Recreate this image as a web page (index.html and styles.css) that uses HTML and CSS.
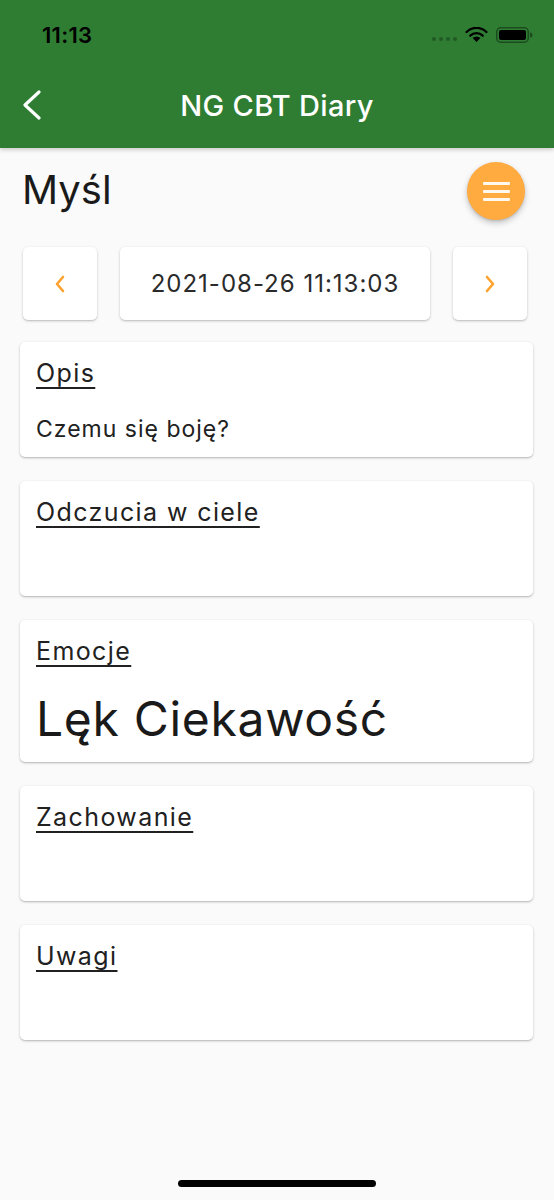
FILE: index.html
```html
<!DOCTYPE html>
<html lang="pl">
<head>
<meta charset="utf-8">
<title>NG CBT Diary</title>
<link rel="stylesheet" href="styles.css">
</head>
<body>
<div class="screen">
  <header class="appbar">
    <div class="status">
      <span class="time">11:13</span>
      <div class="status-icons">
        <span class="signal"><i></i><i></i><i></i><i></i></span>
        <svg class="wifi" width="23" height="15" viewBox="0 0 23 15">
          <path d="M11.5 15 L7.6 11 A5.6 5.6 0 0 1 15.4 11 Z" fill="#000"/>
          <path d="M5.3 8.7 A8.8 8.8 0 0 1 17.7 8.7" stroke="#000" stroke-width="2.4" fill="none" stroke-linecap="round"/>
          <path d="M1.6 5 A14 14 0 0 1 21.4 5" stroke="#000" stroke-width="2.4" fill="none" stroke-linecap="round"/>
        </svg>
        <svg class="battery" width="37" height="16" viewBox="0 0 37 16">
          <rect x="0.75" y="0.75" width="31.5" height="14.5" rx="4" fill="none" stroke="rgba(0,0,0,0.4)" stroke-width="1.5"/>
          <rect x="3" y="3" width="27" height="10" rx="2" fill="#000"/>
          <path d="M34 5.5 A2.5 2.5 0 0 1 34 10.5 Z" fill="rgba(0,0,0,0.4)"/>
        </svg>
      </div>
    </div>
    <div class="toolbar">
      <svg class="back" width="20" height="32" viewBox="0 0 20 32">
        <polyline points="17,2 3,15 17,28" fill="none" stroke="#fff" stroke-width="3.2" stroke-linecap="round" stroke-linejoin="round"/>
      </svg>
      <h1 class="title">NG CBT Diary</h1>
      <span></span>
    </div>
  </header>

  <main class="content">
    <div class="head">
      <h2 class="page-title">Myśl</h2>
      <button class="fab" type="button" aria-label="menu">
        <span></span><span></span><span></span>
      </button>
    </div>

    <div class="date-row">
      <button class="nav-btn" type="button" aria-label="poprzedni">
        <svg width="12" height="18" viewBox="0 0 12 18"><polyline points="9,2 3,9 9,16" fill="none" stroke="#ffa22e" stroke-width="2.6" stroke-linecap="round" stroke-linejoin="round"/></svg>
      </button>
      <div class="date-box">2021-08-26 11:13:03</div>
      <button class="nav-btn" type="button" aria-label="następny">
        <svg width="12" height="18" viewBox="0 0 12 18"><polyline points="3,2 9,9 3,16" fill="none" stroke="#ffa22e" stroke-width="2.6" stroke-linecap="round" stroke-linejoin="round"/></svg>
      </button>
    </div>

    <section class="card">
      <h3 class="card-title">Opis</h3>
      <p class="card-body">Czemu się boję?</p>
    </section>
    <section class="card">
      <h3 class="card-title">Odczucia w ciele</h3>
      <p class="card-body">&nbsp;</p>
    </section>
    <section class="card">
      <h3 class="card-title">Emocje</h3>
      <p class="card-body big">Lęk Ciekawość</p>
    </section>
    <section class="card">
      <h3 class="card-title">Zachowanie</h3>
      <p class="card-body">&nbsp;</p>
    </section>
    <section class="card">
      <h3 class="card-title">Uwagi</h3>
      <p class="card-body">&nbsp;</p>
    </section>
  </main>

  <div class="home-indicator"></div>
</div>
</body>
</html>
```

FILE: styles.css
```css
* { box-sizing: border-box; }

html, body {
  margin: 0;
  padding: 0;
  background: #fafafa;
}

body {
  font-family: Inter, "Noto Sans", "DejaVu Sans", sans-serif;
  color: #212121;
}

.screen {
  width: 554px;
  height: 1200px;
  display: flex;
  flex-direction: column;
  overflow: hidden;
}

.appbar {
  background: #2e7d32;
  box-shadow: 0 2px 4px rgba(0, 0, 0, 0.18);
  position: relative;
  z-index: 1;
}

.status {
  height: 66px;
  padding: 4px 21px 0 42px;
  display: flex;
  align-items: center;
  justify-content: space-between;
}

.time {
  font-size: 22px;
  font-weight: 600;
  color: #000;
  letter-spacing: 0.3px;
}

.status-icons {
  display: flex;
  align-items: center;
  gap: 8px;
}

.signal {
  display: flex;
  gap: 3px;
  padding-top: 7px;
}

.signal i {
  width: 4px;
  height: 4px;
  border-radius: 50%;
  background: rgba(0, 0, 0, 0.28);
}

.wifi { margin-top: -1px; }

.toolbar {
  height: 82px;
  padding: 0 22px 3px 22px;
  display: grid;
  grid-template-columns: 1fr auto 1fr;
  align-items: center;
}

.back { display: block; }

.title {
  margin: 0;
  font-size: 29px;
  font-weight: 500;
  color: #fff;
  letter-spacing: 0.3px;
}

.content {
  flex: 1;
}

.head {
  padding: 14px 29px 0 22px;
  height: 72px;
  display: flex;
  align-items: center;
  justify-content: space-between;
}

.page-title {
  margin: -4px 0 0;
  font-size: 40px;
  font-weight: 400;
  color: #1a1a1a;
}

.fab {
  width: 58px;
  height: 58px;
  border: 0;
  border-radius: 50%;
  background: #ffab40;
  box-shadow: 0 3px 6px rgba(0, 0, 0, 0.22), 0 1px 2px rgba(0, 0, 0, 0.12);
  display: flex;
  flex-direction: column;
  align-items: center;
  justify-content: center;
  gap: 5px;
  padding: 0;
}

.fab span {
  width: 27px;
  height: 3px;
  background: #fff8ee;
  border-radius: 1px;
}

.date-row {
  margin-top: 27px;
  padding: 0 27px 0 23px;
  display: flex;
  gap: 23px;
  height: 73px;
}

.nav-btn,
.date-box {
  background: #fff;
  border: 0;
  border-radius: 5px;
  box-shadow: 0 1px 3px rgba(0, 0, 0, 0.2), 0 1px 1px rgba(0, 0, 0, 0.08);
}

.nav-btn {
  width: 74px;
  display: flex;
  align-items: center;
  justify-content: center;
  padding: 0;
}

.nav-btn svg { display: block; }

.date-box {
  flex: 1;
  display: flex;
  align-items: center;
  justify-content: center;
  font-size: 24px;
  letter-spacing: 1px;
  color: #2a2a2a;
}

.card {
  margin: 22px 21px 0 20px;
  background: #fff;
  border-radius: 5px;
  box-shadow: 0 1px 3px rgba(0, 0, 0, 0.2), 0 1px 1px rgba(0, 0, 0, 0.1);
  padding: 16px 16px 14px;
}

.card + .card { margin-top: 24px; }

.card-title {
  margin: 0;
  font-size: 25px;
  font-weight: 400;
  line-height: 30px;
  letter-spacing: 1.4px;
  color: #212121;
  text-decoration: underline;
  text-decoration-thickness: 1.5px;
  text-underline-offset: 5px;
  display: inline-block;
}

.card-body {
  margin: 27px 0 0;
  font-size: 23px;
  line-height: 28px;
  letter-spacing: 1px;
  color: #212121;
}

.card-body.big {
  margin-top: 24px;
  font-size: 48px;
  line-height: 58px;
  letter-spacing: 0.7px;
  color: #1a1a1a;
}

.home-indicator {
  width: 198px;
  height: 7px;
  border-radius: 4px;
  background: #000;
  margin: 0 auto 13px;
  flex-shrink: 0;
}
```
